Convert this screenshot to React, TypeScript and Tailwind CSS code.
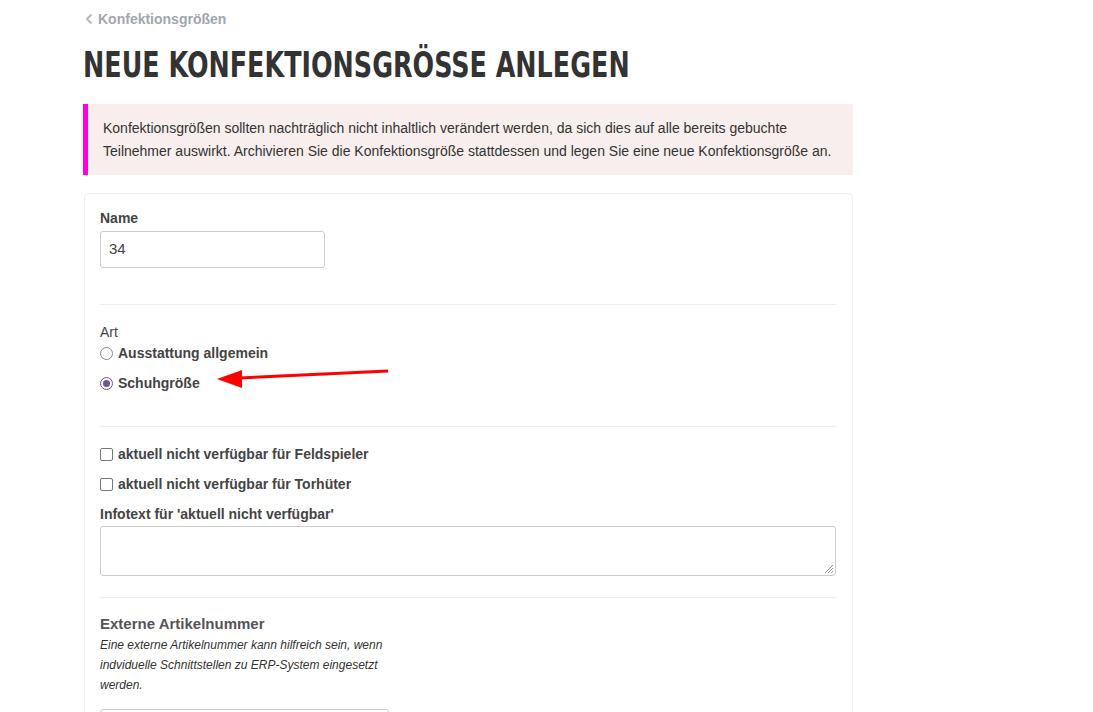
import React from "react";

export default function App() {
  return (
    <div className="min-h-[712px] bg-white text-[#333]" style={{ fontFamily: '"Liberation Sans", Arial, sans-serif' }}>
      <div className="pl-[83px] w-[853px]">
        <div className="pt-[15px] flex items-center gap-[4px] text-[14px] font-bold text-[#a2a6ad] h-[23px]">
          <svg width="8" height="12" viewBox="0 0 8 12" className="ml-[2px]">
            <path d="M6.5 1.5 L2 6 L6.5 10.5" fill="none" stroke="#b5b8bd" strokeWidth="2" />
          </svg>
          <span className="ml-[1px]">Konfektionsgrößen</span>
        </div>
        <h1
          className="mt-[22px] text-[35px] leading-[40px] font-bold text-[#333] origin-left scale-x-[0.807] whitespace-nowrap"
          style={{ fontFamily: '"Liberation Sans Narrow", "DejaVu Sans Condensed", sans-serif' }}
        >
          NEUE KONFEKTIONSGRÖSSE ANLEGEN
        </h1>
        <div className="mt-[19px] h-[71px] bg-[#f7eeed] border-l-[5px] border-[#ff00e0] pl-[15px] pt-[13px] text-[14px] leading-[23px] text-[#333]">
          Konfektionsgrößen sollten nachträglich nicht inhaltlich verändert werden, da sich dies auf alle bereits gebuchte
          <br />
          Teilnehmer auswirkt. Archivieren Sie die Konfektionsgröße stattdessen und legen Sie eine neue Konfektionsgröße an.
        </div>
        <div className="mt-[18px] ml-[1px] border border-[#f0f0f0] rounded-[4px] pl-[15px] pr-[16px] pt-[16px] pb-[40px]">
          <div className="text-[14px] font-bold text-[#444] leading-[17px]">Name</div>
          <div className="mt-[4px] w-[225px] h-[37px] border border-[#ccc] rounded-[3px] flex items-center pl-[8px] text-[15px] text-[#444]">
            34
          </div>
          <div className="mt-[36px] border-t border-[#eee]" />
          <div className="mt-[19px] text-[14px] text-[#444] leading-[17px]">Art</div>
          <div className="relative">
            <div className="mt-[4px] flex items-center gap-[5px] text-[14px] font-bold text-[#444] leading-[17px]">
              <span className="w-[13px] h-[13px] rounded-full border border-[#888] bg-white" />
              Ausstattung allgemein
            </div>
            <div className="mt-[13px] flex items-center gap-[5px] text-[14px] font-bold text-[#444] leading-[17px]">
              <span className="w-[13px] h-[13px] rounded-full border border-[#6f5499] bg-white flex items-center justify-center">
                <span className="w-[7px] h-[7px] rounded-full bg-[#6f5499]" />
              </span>
              Schuhgröße
            </div>
            <svg className="absolute left-[117px] top-[23px]" width="172" height="22" viewBox="0 0 172 22">
              <line x1="171" y1="3" x2="22" y2="10" stroke="#ff0000" strokeWidth="3" />
              <polygon points="0,11 25,2 25,20" fill="#ff0000" />
            </svg>
          </div>
          <div className="mt-[34px] border-t border-[#eee]" />
          <div className="mt-[19px] flex items-center gap-[5px] text-[14px] font-bold text-[#444] leading-[17px]">
            <span className="w-[13px] h-[13px] rounded-[2px] border border-[#777] bg-white" />
            aktuell nicht verfügbar für Feldspieler
          </div>
          <div className="mt-[13px] flex items-center gap-[5px] text-[14px] font-bold text-[#444] leading-[17px]">
            <span className="w-[13px] h-[13px] rounded-[2px] border border-[#777] bg-white" />
            aktuell nicht verfügbar für Torhüter
          </div>
          <div className="mt-[13px] text-[14px] font-bold text-[#444] leading-[17px]">Infotext für 'aktuell nicht verfügbar'</div>
          <div className="relative mt-[3px] h-[50px] border border-[#ccc] rounded-[3px]">
            <svg className="absolute right-[1px] bottom-[1px]" width="10" height="10" viewBox="0 0 10 10">
              <line x1="9" y1="1" x2="1" y2="9" stroke="#999" strokeWidth="1" />
              <line x1="9" y1="4" x2="4" y2="9" stroke="#999" strokeWidth="1" />
              <line x1="9" y1="7" x2="7" y2="9" stroke="#999" strokeWidth="1" />
            </svg>
          </div>
          <div className="mt-[21px] border-t border-[#eee]" />
          <div className="mt-[17px] text-[15px] font-bold text-[#555] leading-[18px]">Externe Artikelnummer</div>
          <div className="mt-[2px] w-[300px] text-[12px] italic text-[#333] leading-[20px]">
            Eine externe Artikelnummer kann hilfreich sein, wenn indviduelle Schnittstellen zu ERP-System eingesetzt werden.
          </div>
          <div className="mt-[14px] w-[289px] h-[37px] border border-[#ccc] rounded-[3px]" />
        </div>
      </div>
    </div>
  );
}
